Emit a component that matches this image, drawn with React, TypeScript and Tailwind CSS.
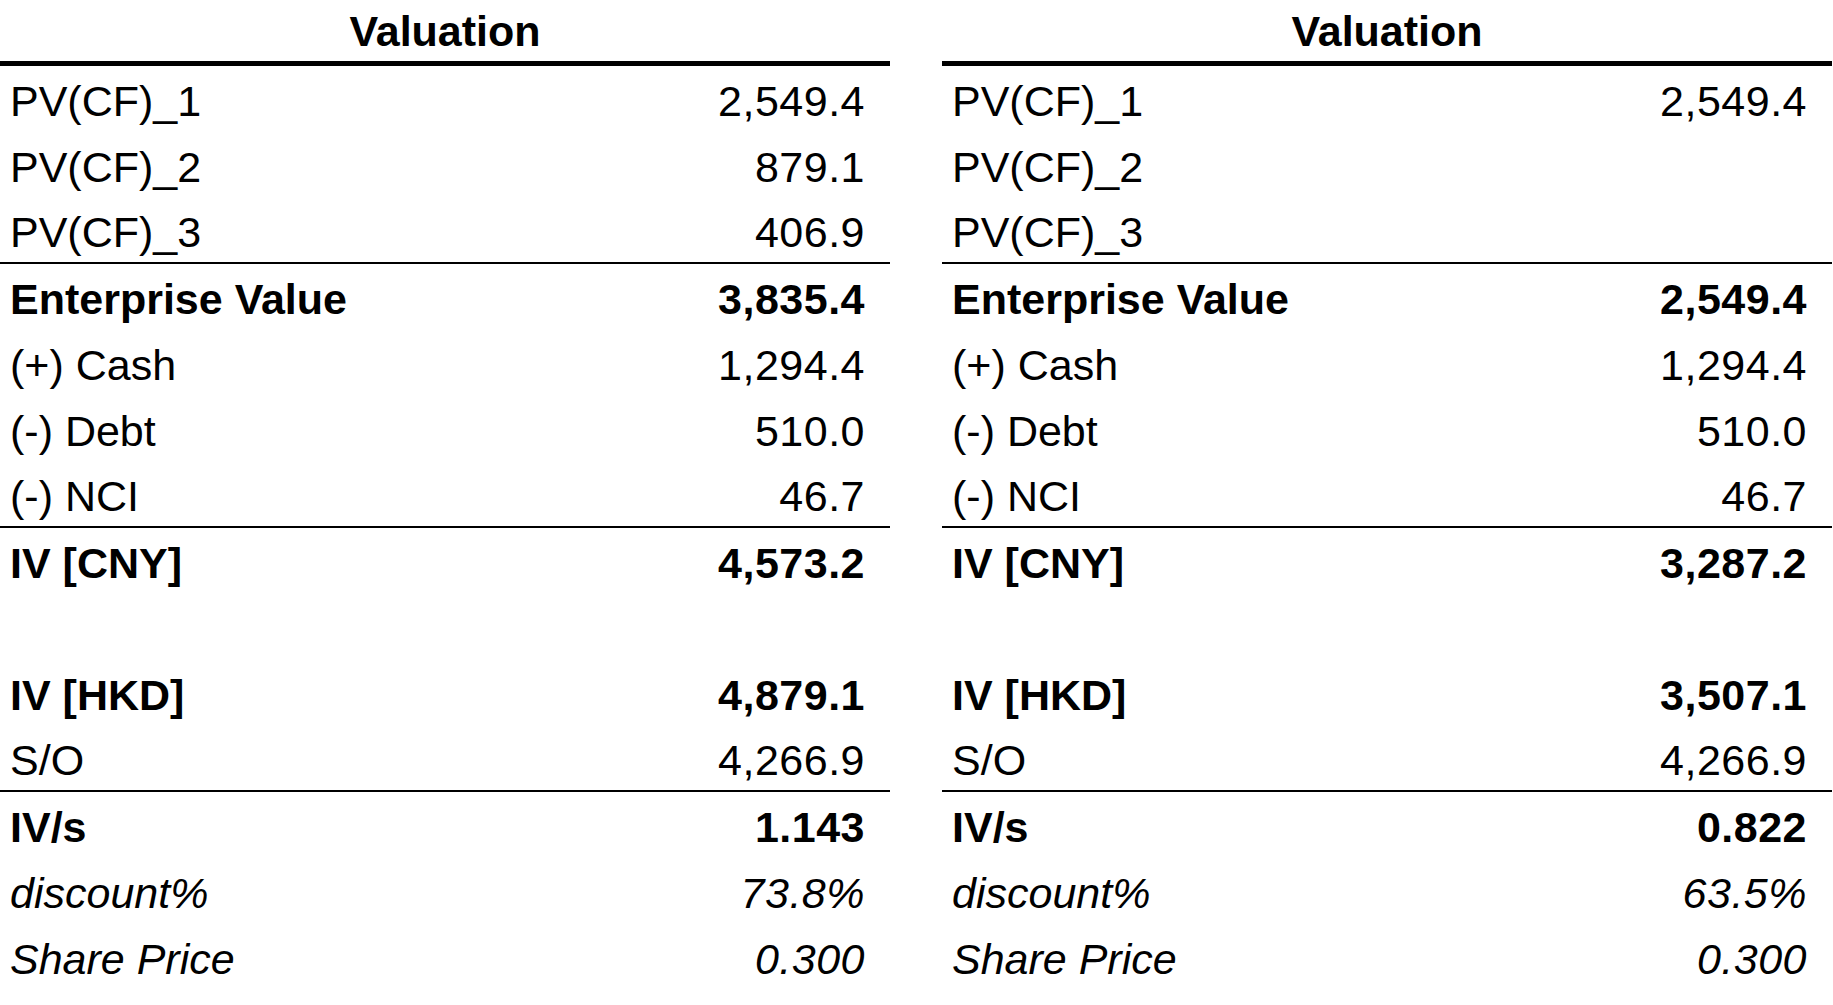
import React from 'react';

type Row = {
  label: string;
  value: string;
  bold?: boolean;
  italic?: boolean;
  rule?: boolean;
};

const leftRows: Row[] = [
  { label: 'PV(CF)_1', value: '2,549.4' },
  { label: 'PV(CF)_2', value: '879.1' },
  { label: 'PV(CF)_3', value: '406.9', rule: true },
  { label: 'Enterprise Value', value: '3,835.4', bold: true },
  { label: '(+) Cash', value: '1,294.4' },
  { label: '(-) Debt', value: '510.0' },
  { label: '(-) NCI', value: '46.7', rule: true },
  { label: 'IV [CNY]', value: '4,573.2', bold: true },
  { label: '', value: '' },
  { label: 'IV [HKD]', value: '4,879.1', bold: true },
  { label: 'S/O', value: '4,266.9', rule: true },
  { label: 'IV/s', value: '1.143', bold: true },
  { label: 'discount%', value: '73.8%', italic: true },
  { label: 'Share Price', value: '0.300', italic: true },
];

const rightRows: Row[] = [
  { label: 'PV(CF)_1', value: '2,549.4' },
  { label: 'PV(CF)_2', value: '' },
  { label: 'PV(CF)_3', value: '', rule: true },
  { label: 'Enterprise Value', value: '2,549.4', bold: true },
  { label: '(+) Cash', value: '1,294.4' },
  { label: '(-) Debt', value: '510.0' },
  { label: '(-) NCI', value: '46.7', rule: true },
  { label: 'IV [CNY]', value: '3,287.2', bold: true },
  { label: '', value: '' },
  { label: 'IV [HKD]', value: '3,507.1', bold: true },
  { label: 'S/O', value: '4,266.9', rule: true },
  { label: 'IV/s', value: '0.822', bold: true },
  { label: 'discount%', value: '63.5%', italic: true },
  { label: 'Share Price', value: '0.300', italic: true },
];

const ValuationTable: React.FC<{ rows: Row[] }> = ({ rows }) => (
  <div className="flex flex-col">
    <div className="h-[66px] border-b-[5px] border-black flex items-center justify-center pt-[2px]">
      <span className="text-[43px] font-bold leading-none">Valuation</span>
    </div>
    {rows.map((row, i) => (
      <div
        key={i}
        className={`h-[66px] flex items-center justify-between pl-[10px] pr-[25px] pt-[5px] text-[43px] leading-none ${
          row.rule ? 'border-b-2 border-black' : ''
        } ${row.bold ? 'font-bold' : ''} ${row.italic ? 'italic' : ''}`}
      >
        <span>{row.label}</span>
        <span className="tracking-[0.5px]">{row.value}</span>
      </div>
    ))}
  </div>
);

export default function App() {
  return (
    <div className="w-[1833px] h-[1005px] bg-white text-black overflow-hidden font-['Liberation_Sans',Arial,sans-serif]">
      <div className="grid grid-cols-[890px_890px] gap-x-[52px]">
        <ValuationTable rows={leftRows} />
        <ValuationTable rows={rightRows} />
      </div>
    </div>
  );
}
